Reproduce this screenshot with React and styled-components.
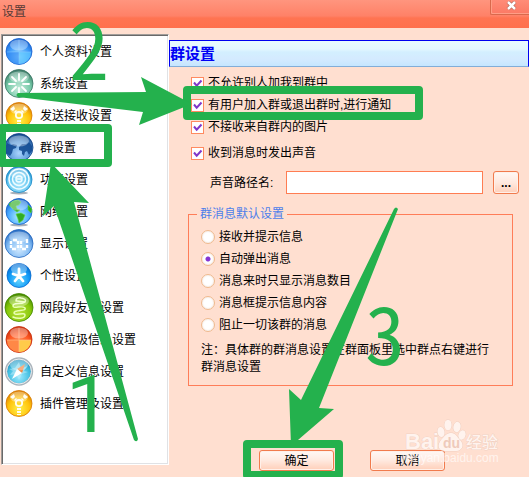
import React, { useState } from "react";
import styled, { createGlobalStyle } from "styled-components";

const GlobalStyle = createGlobalStyle`
  *, *::before, *::after { box-sizing: border-box; }
  body {
    margin: 0;
    background: #ffdfd0;
    color: #000;
    font: 12px/16px "Liberation Sans", "Noto Sans CJK SC", sans-serif;
  }
  button, input { font: inherit; color: inherit; }
`;

const Window = styled.div`
  position: relative;
  display: flex;
  flex-direction: column;
  min-height: 100vh;
  overflow: hidden;
  background: #ffdfd0;
`;

const TitleBar = styled.header`
  display: flex;
  align-items: flex-start;
  justify-content: space-between;
  height: 28px;
  background: linear-gradient(#ff957e 0, #ff8167 16px, #ff7452 18px, #ff704d 28px);
`;

const Title = styled.h1`
  margin: 0;
  padding: 4px 2px;
  font-size: 12px;
  font-weight: 400;
  color: #573a35;
`;

const CloseButton = styled.button`
  display: flex;
  align-items: center;
  justify-content: center;
  width: 39px;
  height: 15px;
  padding: 0 0 2px 3px;
  border: 0 solid #d9694c;
  border-width: 0 0 1px 1px;
  border-radius: 0 0 0 2px;
  background: linear-gradient(#ff8c78, #fb7964);
  box-shadow: inset 1px -1px #ff9d86;
`;

const Body = styled.div`
  display: flex;
  flex: 1;
  padding: 6px 0 0 1px;
`;

const Sidebar = styled.nav`
  flex: none;
  width: 168px;
  margin-bottom: 12px;
  padding-top: 1px;
  border: 1px solid;
  border-color: #a09c99 #fff #fff #a09c99;
  background: #fff;
  box-shadow: inset 1px 1px #696969, inset -1px -1px #e0e2e5;
`;

const NavItem = styled.button`
  display: flex;
  align-items: center;
  gap: 6px;
  width: 100%;
  height: 32px;
  padding: 0 2px;
  border: 0;
  background: none;
  text-align: left;
  white-space: nowrap;
`;

const NavIcon = styled.svg`
  flex: none;
  width: 30px;
  height: 30px;
`;

const Content = styled.main`
  flex: 1;
  min-width: 0;
  padding-top: 6px;
`;

const SectionTitle = styled.h2`
  height: 27px;
  margin: 0;
  border: 1px solid #0000f0;
  border-bottom-color: #82add8;
  background: linear-gradient(#e9fbff 0, #e4f7ff 8px, #d3efff 11px, #d4eaff 18px, #c5e6ff);
  color: #0000f5;
  font-size: 15px;
  line-height: 25px;
`;

const Panel = styled.form`
  padding: 5px 10px 0 19px;
`;

const CheckRow = styled.label`
  display: flex;
  align-items: center;
  gap: 4px;
  height: 22px;
  margin-top: ${(p) => (p.$spaced ? "4px" : "0")};
`;

const CheckBox = styled.input`
  appearance: none;
  flex: none;
  width: 13px;
  height: 13px;
  margin: 0 0 0 3px;
  border: 1px solid #ff8a60;
  background-color: #fff;
  &:checked {
    background-image: url("data:image/svg+xml,%3Csvg xmlns='http://www.w3.org/2000/svg' viewBox='0 0 11 11'%3E%3Cpath d='M2 4.5l2.7 3.2L9.5 2.5' fill='none' stroke='%238138c9' stroke-width='2'/%3E%3C/svg%3E");
  }
`;

const PathRow = styled.div`
  display: flex;
  align-items: center;
  margin-top: 7px;
  padding-left: 22px;
`;

const PathLabel = styled.label`
  flex: none;
  width: 76px;
`;

const PathInput = styled.input`
  flex: 1;
  min-width: 0;
  height: 23px;
  padding: 0 4px;
  border: 1px solid #ff7d52;
  border-radius: 0;
  background: #fff;
  outline: none;
`;

const PushButton = styled.button`
  width: ${(p) => (p.$small ? "26px" : "75px")};
  height: ${(p) => (p.$small ? "23px" : "21px")};
  margin-left: ${(p) => (p.$small ? "10px" : "0")};
  padding: 0;
  border: 1px solid #f17b4d;
  border-radius: 3px;
  background: linear-gradient(#fff8f5, #ffe9df 50%, #ffcfb9);
  box-shadow: inset 0 0 0 1px #fff0e9;
  font-weight: ${(p) => (p.$small ? "700" : "400")};
  line-height: 18px;
`;

const Group = styled.fieldset`
  min-width: 0;
  margin: 13px 6px 0 0;
  padding: 5px 12px 9px;
  border: 1px solid #ff7d58;
`;

const GroupTitle = styled.legend`
  margin-left: -4px;
  padding: 0 3px;
  color: #4d7eea;
  line-height: 14px;
`;

const RadioRow = styled.label`
  display: flex;
  align-items: center;
  gap: 4px;
  height: 22px;
`;

const Radio = styled.input`
  appearance: none;
  flex: none;
  width: 14px;
  height: 14px;
  margin: 0;
  border: 1px solid #efb98d;
  border-radius: 50%;
  background: #fff;
  box-shadow: inset 0 0 2px #e8d5ca;
  &:checked {
    background: radial-gradient(circle, #8535d3 0 2px, #fff 3px);
  }
`;

const Note = styled.p`
  margin: 6px 0 0;
  line-height: 17px;
`;

const Actions = styled.div`
  display: flex;
  gap: 36px;
  margin-top: 64px;
  padding-left: 71px;
`;

const Overlay = styled.svg`
  position: absolute;
  top: 0;
  left: 0;
  width: 529px;
  height: 477px;
  overflow: visible;
  pointer-events: none;
`;

const StepNumber = styled.text`
  font-family: ${(p) => (p.$plain ? "Roboto, sans-serif" : '"Noto Sans CJK SC", sans-serif')};
  font-size: 80px;
  font-feature-settings: "hwid";
`;

const stops = {
  blue: ["#a9e4ff", "#3f9bfa", "#1560cf"],
  mint: ["#c9eddd", "#75c8a7", "#3a7563"],
  gold: ["#fff04a", "#ffc20b", "#d87800"],
  navy: ["#a9d4ff", "#5494d5", "#124487"],
  cyan: ["#a9e5fb", "#65c8f2", "#1686c5"],
  sky: ["#b0f0ff", "#48a8ff", "#135ec6"],
  pale: ["#d0e9ff", "#7fb9f2", "#2367bf"],
  azure: ["#63d5ff", "#109af6", "#0568ce"],
  lime: ["#b8e03a", "#88c90b", "#438600"],
  orange: ["#ff9a60", "#ff5a25", "#c62b08"],
  teal: ["#9deaff", "#43bfe1", "#1989b9"],
};

const drawings = {
  quarters: (
    <g>
      <path d="M3 15h12v12A12 12 0 0 1 3 15" fill="#2d86f4" opacity=".6" />
      <path d="M15 15h12a12 12 0 0 1-12 12z" fill="#5cc6ff" opacity=".7" />
      <path d="M15 3v24M3 15h24" stroke="#8bcaff" strokeWidth=".5" />
    </g>
  ),
  burst: (
    <path d="M15 5v6M15 19v6M5 15h6M19 15h6M8 8l4 4M18 18l4 4M22 8l-4 4M12 18l-4 4" stroke="#fff" strokeWidth="1.8" strokeLinecap="round" />
  ),
  radiation: (
    <g fill="#fffdf0">
      <circle cx="15" cy="14" r="3.2" fill="none" stroke="#fffdf0" strokeWidth="1.8" />
      <path d="M6 8l4-3 1 3-2 2zM24 8l-4-3-1 3 2 2zM10 11l2-2 1 1-2 2zM20 11l-2-2-1 1 2 2z" />
      <path d="M13 19h4v2h-4zM13 22h4v2h-4zM13 25h4v1h-4z" />
    </g>
  ),
  globe: (
    <path d="M1 15l2-5 4 2 2-1 4 1-1 3-3 1-1 4-2 3-4-3zM15 14l3-3h4l3-2 3 4v5l-3 4-2-4-2 1-1 4-2-2v-3l-3-1z" fill="#144b92" opacity=".9" />
  ),
  rings: (
    <g fill="none" stroke="#effcff" strokeWidth="1.5">
      <circle cx="15" cy="14" r="10" />
      <circle cx="15" cy="14" r="6.5" />
      <circle cx="15" cy="14" r="3" />
      <path d="M13 14h4" />
    </g>
  ),
  earth: (
    <path d="M5 7q4-4 9-4l3 2-2 3-3 1 1 3 3 1-3 2-4-3-3-3zM12 17l5-1 4 2-2 5-4 3-1-4zM24 8l4 4-1 4-3-3z" fill="#31ad25" stroke="#63d646" strokeWidth=".6" />
  ),
  digital: (
    <g fill="none" stroke="#fff" strokeWidth="2.4">
      <path d="M7 12v3M7 16v3M8 20h4M9 11h4M14 12v3M14 16v3M17 12v3M17 16v3M18 20h4M23 10v4M23 16v3" />
    </g>
  ),
  star: (
    <path d="M15 8v7m0 0l-6-2m6 2l6-2m-6 2l-4 5m4-5l4 5" fill="none" stroke="#fff" strokeWidth="2.8" strokeLinecap="round" />
  ),
  coil: (
    <path d="M12 8q0-4 5-3 6 1 4 4l-8-1M21 9c-5 3-12 0-12 4 0 3 10-1 12 2 2 4-11 1-11 5 0 3 11-1 11 2 0 4-8 4-12 2" fill="none" stroke="#eaffb5" strokeWidth="1.5" strokeLinecap="round" />
  ),
  segments: (
    <g>
      <path d="M3 15h12v12A12 12 0 0 1 3 15" fill="#ff8846" />
      <path d="M15 15h12a12 12 0 0 1-12 12z" fill="#ffcb4a" />
      <path d="M15 3v24M3 15h24" stroke="#ffc28e" strokeWidth=".6" />
    </g>
  ),
  compass: (
    <g>
      <circle cx="15" cy="14.5" r="13" fill="none" stroke="#aab3bb" strokeWidth="2.4" />
      <circle cx="15" cy="14.5" r="12.5" fill="none" stroke="#e9edf0" />
      <path d="M15 5l2 7 6-3-3 5 4 1-6 2-3 6-3-6-6 1 3-4-4-2 6-1z" fill="#bbebf8" opacity=".55" />
      <path d="M21 7l-3 9-5-4z" fill="#f2853e" />
      <path d="M8 22l5-10 5 4z" fill="#fff" />
    </g>
  ),
};

function Orb({ tone, art, size }) {
  const id = `orb-${tone}-${art}`;
  const grounded = art === "rings" || art === "earth";
  return (
    <NavIcon viewBox="0 0 30 30" aria-hidden="true">
      <defs>
        <radialGradient id={id} cx="50%" cy="70%" r="70%">
          <stop offset="0" stopColor={stops[tone][0]} />
          <stop offset=".6" stopColor={stops[tone][1]} />
          <stop offset="1" stopColor={stops[tone][2]} />
        </radialGradient>
      </defs>
      {grounded && <ellipse cx="15" cy="28" rx="9" ry="1.5" fill="#526173" opacity=".5" />}
      <circle cx="15" cy="14.5" r={size} fill={`url(#${id})`} stroke={stops[tone][2]} strokeWidth=".8" />
      {drawings[art]}
      <ellipse cx="15" cy="8" rx={size - 4} ry="5.5" fill="#fff" opacity=".35" />
    </NavIcon>
  );
}

const sections = [
  ["个人资料设置", "blue", "quarters", 13],
  ["系统设置", "mint", "burst", 14],
  ["发送接收设置", "gold", "radiation", 13],
  ["群设置", "navy", "globe", 14],
  ["功能设置", "cyan", "rings", 13],
  ["网络设置", "sky", "earth", 13],
  ["显示设置", "pale", "digital", 14],
  ["个性设置", "azure", "star", 12],
  ["网段好友单设置", "lime", "coil", 14],
  ["屏蔽垃圾信息设置", "orange", "segments", 13],
  ["自定义信息设置", "teal", "compass", 13],
  ["插件管理及设置", "gold", "radiation", 13],
];

const checks = [
  "不允许别人加我到群中",
  "有用户加入群或退出群时,进行通知",
  "不接收来自群内的图片",
  "收到消息时发出声音",
];

const modes = [
  "接收并提示信息",
  "自动弹出消息",
  "消息来时只显示消息数目",
  "消息框提示信息内容",
  "阻止一切该群的消息",
];

function Watermark() {
  return (
    <g fill="#fff" stroke="#dcb9ab" strokeWidth=".6" opacity=".65" fontFamily='"Liberation Sans", "Noto Sans CJK SC", sans-serif' paintOrder="stroke">
      <text x="405" y="449" fontSize="22" fontWeight="700">Bai</text>
      <ellipse cx="441" cy="432" rx="3.5" ry="5" transform="rotate(-12 441 432)" />
      <ellipse cx="448" cy="425" rx="3.6" ry="5.2" />
      <ellipse cx="457" cy="427" rx="3.6" ry="5.2" transform="rotate(12 457 427)" />
      <ellipse cx="462" cy="435" rx="3.5" ry="4.8" transform="rotate(20 462 435)" />
      <path d="M451 433c5 0 6 4 9 7 5 5 2 11-4 11h-11c-7 0-8-6-4-11 3-3 5-7 10-7z" />
      <text x="443" y="448" fontSize="14" fontWeight="700" fill="#e7c0b0" stroke="none">du</text>
      <text x="466" y="448" fontSize="16" fontWeight="500">经验</text>
      <text x="402" y="462" fontSize="12" stroke="none">jingyan.baidu.com</text>
    </g>
  );
}

function Guides() {
  return (
    <g fill="#24b14d">
      <g fill="none" stroke="#24b14d" strokeWidth="8" strokeLinejoin="round">
        <rect x="2" y="128" width="106" height="35" />
        <rect x="187" y="90" width="232" height="26" />
        <rect x="247" y="444" width="92" height="31" />
      </g>
      <path d="M18 93L146 92L141 77L192 104L139 125L143 112L18 97Q15 95 18 93Z" />
      <path d="M51 163L89 203L74 202L138 439Q137 443 134 440L54 206L43 216Z" />
      <path d="M398 209L319 408L334 409L291 446L289 389L301 400L394 209Q396 206 398 209Z" />
      <StepNumber x="69" y="80">2</StepNumber>
      <StepNumber x="66" y="432" $plain>1</StepNumber>
      <StepNumber x="365" y="365">3</StepNumber>
    </g>
  );
}

export default function App() {
  const [mode, setMode] = useState(1);
  return (
    <Window>
      <GlobalStyle />
      <TitleBar>
        <Title>设置</Title>
        <CloseButton aria-label="关闭">
          <svg width="12" height="10" viewBox="0 0 12 10" aria-hidden="true">
            <path d="M2 1l7 7M9 1L2 8" stroke="#ac6558" strokeWidth="3.8" />
            <path d="M2 1l7 7M9 1L2 8" stroke="#fff" strokeWidth="2.5" />
          </svg>
        </CloseButton>
      </TitleBar>
      <Body>
        <Sidebar>
          {sections.map(([name, tone, art, size]) => (
            <NavItem key={name} type="button">
              <Orb tone={tone} art={art} size={size} />
              {name}
            </NavItem>
          ))}
        </Sidebar>
        <Content>
          <SectionTitle>群设置</SectionTitle>
          <Panel onSubmit={(e) => e.preventDefault()}>
            {checks.map((text, i) => (
              <CheckRow key={text} $spaced={i === 3}>
                <CheckBox type="checkbox" defaultChecked />
                {text}
              </CheckRow>
            ))}
            <PathRow>
              <PathLabel htmlFor="sound-path">声音路径名:</PathLabel>
              <PathInput id="sound-path" type="text" />
              <PushButton type="button" $small>...</PushButton>
            </PathRow>
            <Group>
              <GroupTitle>群消息默认设置</GroupTitle>
              {modes.map((text, i) => (
                <RadioRow key={text}>
                  <Radio type="radio" name="mode" checked={mode === i} onChange={() => setMode(i)} />
                  {text}
                </RadioRow>
              ))}
              <Note>注：具体群的群消息设置在群面板里选中群点右键进行群消息设置</Note>
            </Group>
            <Actions>
              <PushButton type="submit">确定</PushButton>
              <PushButton type="button">取消</PushButton>
            </Actions>
          </Panel>
        </Content>
      </Body>
      <Overlay viewBox="0 0 529 477">
        <Watermark />
        <Guides />
      </Overlay>
    </Window>
  );
}
